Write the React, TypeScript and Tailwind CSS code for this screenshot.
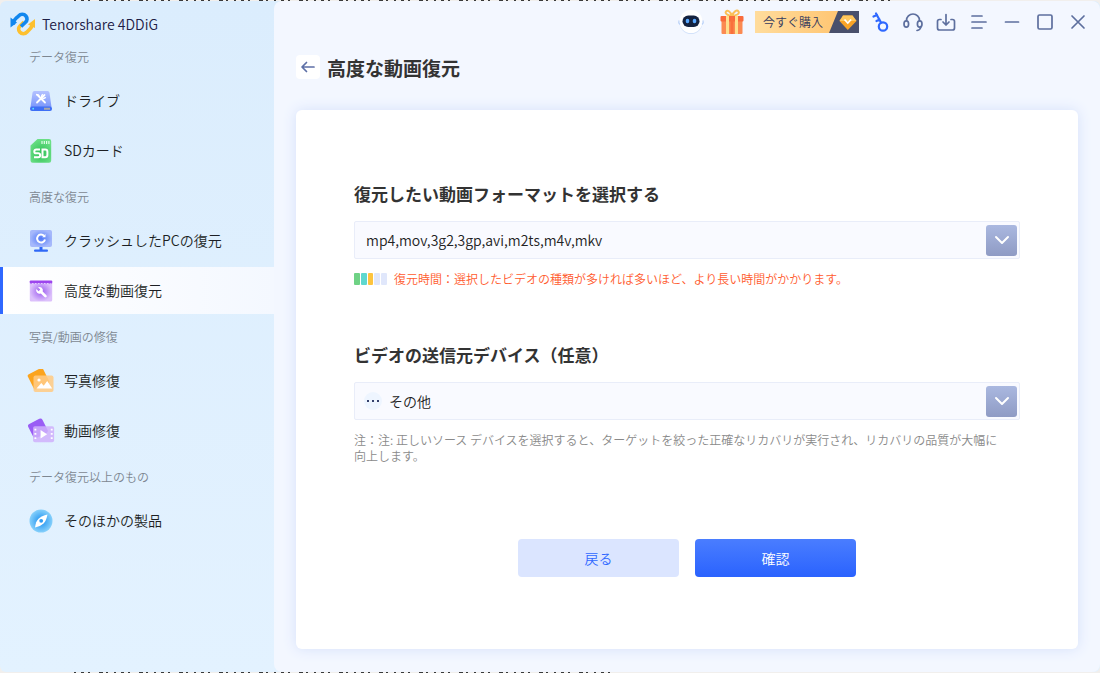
import { useState } from "react";
import type { ReactNode } from "react";

interface NavItem {
  id: string;
  label: string;
  icon: ReactNode;
}

interface NavGroup {
  title: string;
  items: NavItem[];
}

const DriveIcon = () => (
  <svg viewBox="0 0 24 24" className="size-6">
    <defs>
      <linearGradient id="drive" x1="0" y1="0" x2="0" y2="1">
        <stop offset="0" stopColor="#b4c2ff" />
        <stop offset="1" stopColor="#7c97fb" />
      </linearGradient>
    </defs>
    <path d="M5.500 2h13a2 2 0 0 1 2 1.700L22.500 18h-21L3.500 3.700A2 2 0 0 1 5.500 2Z" fill="url(#drive)" />
    <rect x="1" y="17.500" width="22" height="4.500" rx="2" fill="#3f6ff5" />
    <circle cx="4.200" cy="19.700" r=".9" fill="#5fe6ff" />
    <path d="M16 18.700v2M18 18.700v2M20 18.700v2" stroke="#ffd36b" strokeWidth="1.100" />
    <path d="m8.500 6 7.500 7.500M15.500 6 8 13.500" stroke="#fff" strokeWidth="1.800" strokeLinecap="round" />
    <path d="M7 5.500 9.500 6l1 2M14 5.500a2 2 0 1 0 2.500 2.500" fill="none" stroke="#fff" strokeWidth="1.400" />
  </svg>
);

const SdIcon = () => (
  <svg viewBox="0 0 24 24" className="size-6">
    <defs>
      <radialGradient id="sd" cx=".5" cy=".6" r=".6">
        <stop offset="0" stopColor="#2fc055" />
        <stop offset="1" stopColor="#6bdf86" />
      </radialGradient>
    </defs>
    <path d="M8.500 0H20a2.200 2.200 0 0 1 2.200 2.200v19.300A2.200 2.200 0 0 1 20 23.700H3.700a2.200 2.200 0 0 1-2.200-2.200V6.500Z" fill="url(#sd)" />
    <path d="M13 2v3M15.300 2v3M17.600 2v3M19.900 2v3" stroke="#eafff0" strokeWidth="1.100" />
    <path
      d="M11 10.500H7.200a1.700 1.700 0 0 0 0 3.800h2a1.900 1.900 0 0 1 0 3.900H5M13.500 10.500v7.700h2.700a2.200 2.200 0 0 0 2.200-2.200v-3.300a2.200 2.200 0 0 0-2.200-2.200Z"
      fill="none"
      stroke="#fff"
      strokeWidth="2"
    />
  </svg>
);

const CrashIcon = () => (
  <svg viewBox="0 0 24 24" className="size-6">
    <defs>
      <radialGradient id="crash">
        <stop offset="0" stopColor="#4f78f8" />
        <stop offset="1" stopColor="#a5b8fb" />
      </radialGradient>
    </defs>
    <rect x="1" y="1" width="22" height="17" rx="2" fill="url(#crash)" />
    <path d="M10.500 18h3v3h-3z" fill="#2f68f6" />
    <rect x="5" y="20.500" width="14" height="2.200" rx="1" fill="#2f68f6" />
    <path d="M15 6.800a4 4 0 1 0 1 3.700" fill="none" stroke="#fff" strokeWidth="2" />
    <path d="M13.200 8.300h3.300V5Z" fill="#fff" />
  </svg>
);

const VideoIcon = () => (
  <svg viewBox="0 0 24 24" className="size-6">
    <defs>
      <radialGradient id="video">
        <stop offset="0" stopColor="#9c5cf0" />
        <stop offset="1" stopColor="#dcc0fb" />
      </radialGradient>
    </defs>
    <path d="M.8 2.500h22.400v18.500a1.500 1.500 0 0 1-1.500 1.500H2.300A1.500 1.500 0 0 1 .8 21Z" fill="url(#video)" />
    <rect x=".8" y="1.500" width="22.400" height="3" rx=".8" fill="#9d45ee" />
    <path d="M3 4.500h18.500" stroke="#e3ccff" strokeWidth="1" strokeDasharray="1.500 1.500" />
    <path
      d="M9 8.300a3.400 3.400 0 0 1 4.700 4.200l3.700 3.700a1.300 1.300 0 0 1-1.900 1.900l-3.700-3.700a3.400 3.400 0 0 1-4.500-4.300l2.300 2.200 1.700-1.700Z"
      fill="#fff"
    />
  </svg>
);

const PhotoRepairIcon = () => (
  <svg viewBox="0 0 28 24" className="h-6 w-7">
    <rect x="3" y="1.500" width="17" height="17" rx="2" fill="#fba41f" transform="rotate(-27 11 10)" />
    <rect x="6.500" y="6.500" width="20" height="16.500" rx="2" fill="#ffcb85" fillOpacity=".88" />
    <circle cx="12" cy="11" r="1.600" fill="#fff" />
    <path d="m9.500 19.500 4.800-5.500 2.400 2.700 3.500-4.700 5 7.500Z" fill="#fff" />
  </svg>
);

const VideoRepairIcon = () => (
  <svg viewBox="0 0 30 26" className="h-[26px] w-[30px]">
    <rect x="3" y="2" width="17" height="17" rx="2.500" fill="#9a5df5" transform="rotate(-27 11 10)" />
    <rect x="6.500" y="8" width="22.500" height="17" rx="2" fill="#cfb0fb" fillOpacity=".85" />
    <path d="M9 10.500v13M26.500 10.500v13" stroke="#fff" strokeWidth="2" strokeDasharray="2 2.600" />
    <path d="m14.500 12 7 4.500-7 4.500Z" fill="#fff" />
  </svg>
);

const CompassIcon = () => (
  <svg viewBox="0 0 24 24" className="size-6">
    <defs>
      <radialGradient id="compass">
        <stop offset=".2" stopColor="#2f9cf2" />
        <stop offset="1" stopColor="#86d0fb" />
      </radialGradient>
    </defs>
    <circle cx="12" cy="12" r="11.500" fill="url(#compass)" />
    <path d="M18.500 5.500c-1 4.500-2 7-4 9s-5 3-8.500 4c.5-4 1.500-6.700 3.500-8.700s5-3.600 9-4.300Z" fill="#fff" />
    <circle cx="12.200" cy="11.800" r="1.900" fill="#2f9cf2" />
  </svg>
);

const LogoIcon = () => (
  <svg viewBox="0 0 26 24" className="h-6 w-[26px]">
    <path
      d="M22 10.500c1 3-.5 5-2.800 7.300L17 20a4.800 4.800 0 0 1-7.300 0c-1.700-2-1.400-4.600.4-6.300L14 10"
      fill="none"
      stroke="#fdc02f"
      strokeWidth="3.600"
    />
    <path d="m18 12.500 7-5.500v9Z" fill="#fdc02f" />
    <path
      d="M3.500 13c-1-3 .8-5 3-7.200L8.600 4a4.800 4.800 0 0 1 7.300 0c1.700 2 1.400 4.600-.4 6.300L11 14.500"
      fill="none"
      stroke="#1287ee"
      strokeWidth="3.600"
    />
    <path d="M.5 5.500v10l6.500-5Z" fill="#1287ee" />
  </svg>
);

const RobotIcon = () => (
  <svg viewBox="0 0 28 28" className="size-7">
    <circle cx="14" cy="14.500" r="11.500" fill="#d3e2fa" />
    <circle cx="14" cy="13.500" r="11.500" fill="#fff" />
    <path d="M2 12.500q-1 2 1 4M26 12.500q1 2-1 4" fill="none" stroke="#bcd3f8" strokeWidth="1.200" />
    <rect x="5.500" y="7.500" width="17" height="11.500" rx="5.700" fill="#15233f" />
    <ellipse cx="10.500" cy="13" rx="1.800" ry="2.300" fill="#5aa9ff" />
    <ellipse cx="17.500" cy="13" rx="1.800" ry="2.300" fill="#5aa9ff" />
  </svg>
);

const GiftIcon = () => (
  <svg viewBox="0 0 26 26" className="size-[26px]">
    <path d="M13 7C9 6.500 5.500 4.500 7 2.500S12 3 13 7c1-4 5-7 6.500-4.500S17 6.500 13 7Z" fill="none" stroke="#fbc057" strokeWidth="2" />
    <rect x="2.500" y="10" width="21" height="15" rx="1" fill="#fb8a52" />
    <rect x="1.500" y="7" width="23" height="5.500" rx="1" fill="#f96b3c" />
    <path d="M7 7h3v18H7zM16 7h3v18h-3z" fill="#ffdf8e" />
    <path d="M11.500 7h3v18h-3z" fill="#f9703c" />
  </svg>
);

const GemIcon = () => (
  <svg viewBox="0 0 30 22" className="h-[22px] w-[30px]">
    <path d="M9 0h21v22H0Z" fill="#49506c" />
    <path d="M14 4.500h9.500l4 5.500-8.700 9L10.500 10Z" fill="#f8a326" />
    <path d="M14 4.500h9.500l4 5.500h-17Z" fill="#ffc75c" />
    <path d="m15.500 8.500 3.300 3.500 3.300-3.500" fill="none" stroke="#fff" strokeWidth="1.700" />
  </svg>
);

const stroke = {
  fill: "none",
  stroke: "currentColor",
  strokeWidth: 1.7,
  strokeLinecap: "round",
  strokeLinejoin: "round",
} as const;

const toolButtons: { label: string; color: string; drawing: ReactNode }[] = [
  {
    label: "登録",
    color: "text-[#2f68ff]",
    drawing: (
      <g strokeWidth="2.200">
        <circle cx="13" cy="14.500" r="4.200" />
        <path d="M11 10.500 6 1.500M3.500 4.500 7 3M6.500 9 9.500 7.500" />
      </g>
    ),
  },
  {
    label: "サポート",
    color: "text-[#5d6f9e]",
    drawing: (
      <>
        <path d="M3.500 8.500a6.500 6.500 0 0 1 13 0M18 14.500q-.5 3.500-4 4" />
        <ellipse cx="3.300" cy="12" rx="2.300" ry="3.200" />
        <ellipse cx="16.700" cy="12" rx="2.300" ry="3.200" />
      </>
    ),
  },
  {
    label: "ダウンロード",
    color: "text-[#5d6f9e]",
    drawing: <path d="M5 7.500H3.500a2 2 0 0 0-2 2V16a2 2 0 0 0 2 2h13a2 2 0 0 0 2-2V9.500a2 2 0 0 0-2-2H15M10 2.500V13M7 10l3 3 3-3" />,
  },
  {
    label: "メニュー",
    color: "text-[#5d6f9e]",
    drawing: <path d="M3 4h10M3 10h14M3 16h10" />,
  },
  { label: "最小化", color: "text-[#5d6f9e]", drawing: <path d="M3.500 10h13" /> },
  { label: "最大化", color: "text-[#5d6f9e]", drawing: <rect x="3" y="3" width="14" height="14" rx="1.500" /> },
  { label: "閉じる", color: "text-[#5d6f9e]", drawing: <path d="m4 4 12 12M16 4 4 16" /> },
];

const navGroups: NavGroup[] = [
  {
    title: "データ復元",
    items: [
      { id: "drive", label: "ドライブ", icon: <DriveIcon /> },
      { id: "sd", label: "SDカード", icon: <SdIcon /> },
    ],
  },
  {
    title: "高度な復元",
    items: [
      { id: "crash", label: "クラッシュしたPCの復元", icon: <CrashIcon /> },
      { id: "video", label: "高度な動画復元", icon: <VideoIcon /> },
    ],
  },
  {
    title: "写真/動画の修復",
    items: [
      { id: "photo-repair", label: "写真修復", icon: <PhotoRepairIcon /> },
      { id: "video-repair", label: "動画修復", icon: <VideoRepairIcon /> },
    ],
  },
  {
    title: "データ復元以上のもの",
    items: [{ id: "others", label: "そのほかの製品", icon: <CompassIcon /> }],
  },
];

function Sidebar({ activeId, onSelect }: { activeId: string; onSelect: (id: string) => void }) {
  return (
    <aside className="w-[274px] shrink-0">
      <div className="flex h-[33px] items-center gap-1.5 pt-3 pl-2.5">
        <LogoIcon />
        <span className="text-sm text-[#1d2046]">Tenorshare 4DDiG</span>
      </div>
      <nav>
        {navGroups.map((group) => (
          <section key={group.title}>
            <h2 className="flex h-[43px] items-center pt-0.5 pl-[29px] text-xs text-[#7d8791]">
              {group.title}
            </h2>
            <ul className="flex flex-col gap-[3px]">
              {group.items.map((item) => (
                <li key={item.id}>
                  <button
                    type="button"
                    onClick={() => onSelect(item.id)}
                    className={`flex h-[47px] w-full items-center gap-[9px] border-l-3 pl-6 text-sm text-[#1c1f24] ${
                      item.id === activeId
                        ? "border-[#2f68ff] bg-linear-to-r from-white to-[#f4f8ff]"
                        : "border-transparent"
                    }`}
                  >
                    <span className="flex w-7 justify-center">{item.icon}</span>
                    <span className="pb-0.5">{item.label}</span>
                  </button>
                </li>
              ))}
            </ul>
          </section>
        ))}
      </nav>
    </aside>
  );
}

function TitleBar() {
  return (
    <header className="flex h-[42px] items-center justify-end pr-1.5">
      <button type="button" aria-label="アシスタント">
        <RobotIcon />
      </button>
      <button type="button" aria-label="ギフト" className="ml-3.5">
        <GiftIcon />
      </button>
      <button
        type="button"
        className="mr-1 ml-2.5 flex h-[22px] w-[104px] items-center justify-between bg-linear-to-r from-[#ffdc9c] to-[#ffc067] pl-2 text-xs text-[#343a5e]"
      >
        今すぐ購入
        <GemIcon />
      </button>
      {toolButtons.map(({ label, color, drawing }) => (
        <button
          key={label}
          type="button"
          aria-label={label}
          className={`flex h-8 w-[33px] items-center justify-center ${color}`}
        >
          <svg viewBox="0 0 20 20" className="size-5" {...stroke}>
            {drawing}
          </svg>
        </button>
      ))}
    </header>
  );
}

interface SelectBoxProps {
  id: string;
  options: string[];
  prefix?: ReactNode;
}

function SelectBox({ id, options, prefix }: SelectBoxProps) {
  return (
    <div className="relative mt-[15px]">
      {prefix && (
        <span className="pointer-events-none absolute inset-y-0 left-2.5 flex items-center">{prefix}</span>
      )}
      <select
        id={id}
        className={`h-[38px] w-full appearance-none rounded-xs border border-[#e9edf9] bg-[#f9faff] pr-10 text-sm text-[#222] ${
          prefix ? "pl-[34px]" : "pl-[11px]"
        }`}
      >
        {options.map((option) => (
          <option key={option}>{option}</option>
        ))}
      </select>
      <span className="pointer-events-none absolute inset-y-0 right-[3px] flex items-center">
        <span className="flex size-[31px] items-center justify-center rounded-[3px] bg-linear-to-b from-[#aab8e0] to-[#8f9bc4] text-white">
          <svg viewBox="0 0 20 20" className="size-5" {...stroke} strokeWidth="2">
            <path d="m4 7 6 6 6-6" />
          </svg>
        </span>
      </span>
    </div>
  );
}

// Sliver of the desktop that shows past the window edge
function Backdrop({ length }: { length: number }) {
  return (
    <div className="h-px overflow-hidden bg-[#f1efed] pl-[74px]">
      <svg height="1" width={length} className="block">
        <path d={`M0 .5H${length}`} stroke="#3a3a3a" strokeDasharray="2 5 3 4 2 9 4 3 2 6" />
      </svg>
    </div>
  );
}

export default function App() {
  const [activeId, setActiveId] = useState("video");

  return (
    <div
      lang="ja"
      className="flex min-h-screen flex-col bg-[#f1efed] font-['Noto_Sans_CJK_JP',sans-serif] font-[350]"
    >
      <Backdrop length={820} />
      <div className="flex grow rounded-md bg-linear-to-b from-[#dbedfd] to-[#e3f2ff]">
        <Sidebar activeId={activeId} onSelect={setActiveId} />
        <main className="flex min-w-0 grow flex-col rounded-lg bg-[#f3f7ff] pb-[23px]">
          <TitleBar />
          <div className="flex h-[67px] items-start gap-[7px] pt-3 pl-[22px]">
            <button
              type="button"
              aria-label="前の画面へ"
              className="flex size-6 items-center justify-center rounded-sm bg-white text-[#5d6fa6]"
            >
              <svg viewBox="0 0 20 20" className="size-5" {...stroke}>
                <path d="M16 10H4.500M8.500 5.500 4 10l4.500 4.500" />
              </svg>
            </button>
            <h1 className="text-[19px] leading-[26px] font-bold text-[#333]">高度な動画復元</h1>
          </div>
          <div className="mx-[22px] grow rounded-md bg-white px-[58px] pt-[72px] pb-10 shadow-[0_0_14px_#d5e0fa]">
            <label htmlFor="format" className="block text-[17px] leading-6 font-bold text-[#333]">
              復元したい動画フォーマットを選択する
            </label>
            <SelectBox id="format" options={["mp4,mov,3g2,3gp,avi,m2ts,m4v,mkv"]} />
            <div className="mt-3 flex items-center gap-[7px] text-xs leading-4 text-[#ff5b2e]">
              <span className="flex h-3 w-[33px] gap-px">
                <span className="grow rounded-[1px] bg-[#6fd285]" />
                <span className="grow rounded-[1px] bg-[#5fd8cf]" />
                <span className="grow rounded-[1px] bg-[#fdc43f]" />
                <span className="grow rounded-[1px] bg-[#e0e7fb]" />
                <span className="grow rounded-[1px] bg-[#e0e7fb]" />
              </span>
              <p>復元時間：選択したビデオの種類が多ければ多いほど、より長い時間がかかります。</p>
            </div>

            <label
              htmlFor="device"
              className="mt-14 block text-[17px] leading-6 font-bold text-[#333]"
            >
              ビデオの送信元デバイス（任意）
            </label>
            <SelectBox
              id="device"
              options={["その他"]}
              prefix={
                <svg viewBox="0 0 18 18" className="size-[18px]">
                  <circle cx="9" cy="9" r="9" fill="#eef5ff" />
                  <path d="M3 8h2v2H3zM8 8h2v2H8zM13 8h2v2h-2z" fill="#34406b" />
                </svg>
              }
            />
            <p className="mt-3 text-xs leading-4 text-[#8a8a8a]">
              注：注: 正しいソース デバイスを選択すると、ターゲットを絞った正確なリカバリが実行され、リカバリの品質が大幅に
              <br />
              向上します。
            </p>

            <div className="mt-[75px] flex justify-center gap-4">
              <button
                type="button"
                className="h-[38px] w-[161px] rounded-sm bg-[#dbe5ff] text-sm text-[#2f68ff]"
              >
                戻る
              </button>
              <button
                type="button"
                className="h-[38px] w-[161px] rounded-sm bg-linear-to-b from-[#4a7dff] to-[#2a62fe] text-sm text-white"
              >
                確認
              </button>
            </div>
          </div>
        </main>
      </div>
      <Backdrop length={540} />
    </div>
  );
}
